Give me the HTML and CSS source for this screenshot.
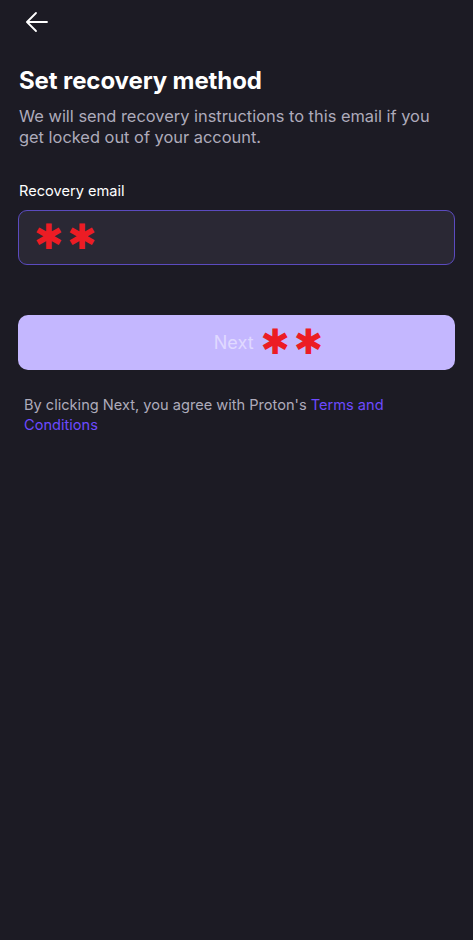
FILE: index.html
```html
<!DOCTYPE html>
<html>
<head>
<meta charset="utf-8">
<link rel="stylesheet" href="styles.css">
</head>
<body>
<div class="screen">
  <div class="topbar">
    <svg class="back" width="24" height="22" viewBox="0 0 24 22" fill="none" stroke="#ffffff" stroke-width="1.8" stroke-linecap="round" stroke-linejoin="round">
      <path d="M22 11H2.5"/>
      <path d="M11 2L2 11l9 9"/>
    </svg>
  </div>
  <h1 class="title">Set recovery method</h1>
  <p class="subtitle">We will send recovery instructions to this email if you get locked out of your account.</p>
  <label class="label">Recovery email</label>
  <div class="input"><span class="marks">✱✱</span></div>
  <button class="next"><span class="next-text">Next</span><span class="marks">✱✱</span></button>
  <p class="terms">By clicking Next, you agree with Proton's <a class="link">Terms and Conditions</a></p>
</div>
</body>
</html>
```
FILE: styles.css
```css
* { box-sizing: border-box; }
html, body { margin: 0; padding: 0; }
body {
  background: #1c1b24;
  width: 473px;
  height: 940px;
  font-family: Inter, "Noto Sans", sans-serif;
  color: #ffffff;
}
.screen {
  padding: 0 18px;
  display: flex;
  flex-direction: column;
}
.topbar {
  height: 44px;
  display: flex;
  align-items: center;
  padding-left: 7px;
}
.back { display: block; }
.title {
  margin: 22px 0 0 1px;
  font-size: 24px;
  font-weight: 700;
  line-height: 30px;
  letter-spacing: -0.1px;
}
.subtitle {
  margin: 10px 0 0 1px;
  font-size: 16.4px;
  line-height: 21px;
  color: #aeabbb;
  font-weight: 400;
}
.label {
  margin: 33px 0 0 1px;
  font-size: 14.6px;
  line-height: 20px;
  color: #ffffff;
}
.input {
  margin-top: 9px;
  height: 55px;
  border: 1.5px solid #5b4bbf;
  border-radius: 9px;
  background: #2a2834;
  display: flex;
  align-items: center;
  padding-left: 15px;
}
.marks {
  font-family: "DejaVu Sans", sans-serif;
  color: #ec1c24;
  font-size: 35px;
  line-height: 1;
  font-weight: 700;
  letter-spacing: 4px;
}
.next {
  margin-top: 50px;
  height: 55px;
  border: none;
  border-radius: 10px;
  background: #c4b7ff;
  display: flex;
  align-items: center;
  justify-content: center;
  gap: 7px;
  font-family: Inter, "Noto Sans", sans-serif;
  padding: 0 0 0 68px;
}
.next-text {
  color: #e0d9ff;
  font-size: 18px;
}
.terms {
  margin: 25px 0 0 6px;
  font-size: 14.6px;
  line-height: 20px;
  color: #aeabbb;
}
.link { color: #6d4aff; }
```
